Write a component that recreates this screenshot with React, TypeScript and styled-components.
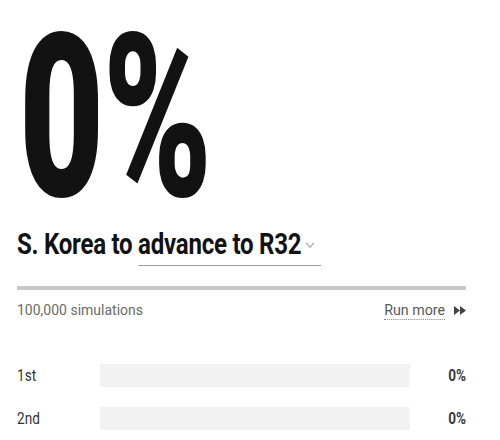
import React from "react";
import styled, { createGlobalStyle } from "styled-components";

const Global = createGlobalStyle`
  body { margin: 0; background: #fff; }
  * { box-sizing: border-box; }
`;

const FONT = `Roboto, "Liberation Sans", sans-serif`;

const Page = styled.div`
  width: 500px;
  height: 440px;
  padding: 0 34px 0 17px;
  font-family: ${FONT};
  color: #121212;
  overflow: hidden;
`;

const Squeeze = styled.span<{ $scale: number; $origin?: string }>`
  display: inline-block;
  white-space: nowrap;
  transform: scaleX(${(p) => p.$scale});
  transform-origin: ${(p) => p.$origin ?? "left"} center;
`;

const BigNumber = styled.div`
  font-size: 228px;
  font-weight: 900;
  line-height: 200px;
  letter-spacing: -2px;
  margin-top: 18px;
  margin-left: 2px;
`;

const Title = styled.h1`
  margin: 8px 0 0 0;
  font-size: 29.5px;
  font-weight: 700;
  line-height: 36px;
  letter-spacing: -0.3px;
`;

const Picker = styled.span`
  display: inline-flex;
  align-items: center;
  gap: 5px;
  border-bottom: 1px solid #9a9a9a;
  padding: 0 8px 3px 0;
  margin-left: 7px;
`;

const Chevron = styled.svg`
  width: 11px;
  height: 8px;
  margin-top: 2px;
`;

const Rule = styled.div`
  height: 4px;
  background: #c7c7c7;
  margin-top: 20px;
`;

const MetaRow = styled.div`
  display: flex;
  justify-content: space-between;
  align-items: center;
  margin-top: 11px;
  font-size: 14px;
  color: #6b6b6b;
`;

const RunMore = styled.span`
  display: inline-flex;
  align-items: center;
  gap: 9px;
`;

const RunLink = styled.span`
  border-bottom: 1px dotted #888;
  font-size: 15px;
  color: #5a5a5a;
  line-height: 18px;
`;

const Rows = styled.div`
  display: flex;
  flex-direction: column;
  gap: 20px;
  margin-top: 45px;
`;

const Row = styled.div`
  display: flex;
  align-items: center;
  height: 23px;
`;

const RowLabel = styled.span`
  width: 83px;
  font-size: 16px;
  color: #333;
`;

const Track = styled.div`
  flex: 1;
  height: 23px;
  background: #f2f2f2;
`;

const Fill = styled.div`
  height: 100%;
  background: #555;
`;

const RowValue = styled.span`
  width: 56px;
  text-align: right;
  font-size: 16px;
  font-weight: 700;
  color: #3a3a3a;
`;

const rows = [
  { label: "1st", value: 0 },
  { label: "2nd", value: 0 },
];

export default function App() {
  return (
    <Page>
      <Global />
      <BigNumber>
        <Squeeze $scale={0.645}>0%</Squeeze>
      </BigNumber>
      <Title>
        <Squeeze $scale={0.815}>
          S. Korea to
          <Picker>
            advance to R32
            <Chevron viewBox="0 0 11 8">
              <path d="M1 2 L5.5 6.5 L10 2" fill="none" stroke="#a0a0a0" strokeWidth="1.2" />
            </Chevron>
          </Picker>
        </Squeeze>
      </Title>
      <Rule />
      <MetaRow>
        <Squeeze $scale={1}>100,000 simulations</Squeeze>
        <RunMore>
          <Squeeze $scale={0.95} $origin="right">
            <RunLink>Run more</RunLink>
          </Squeeze>
          <svg width="12" height="9" viewBox="0 0 12 9">
            <path d="M0 0 L6 4.5 L0 9 Z M6 0 L12 4.5 L6 9 Z" fill="#444" />
          </svg>
        </RunMore>
      </MetaRow>
      <Rows>
        {rows.map((r) => (
          <Row key={r.label}>
            <RowLabel>
              <Squeeze $scale={0.85}>{r.label}</Squeeze>
            </RowLabel>
            <Track>
              <Fill style={{ width: `${r.value}%` }} />
            </Track>
            <RowValue>
              <Squeeze $scale={0.85} $origin="right">
                {r.value}%
              </Squeeze>
            </RowValue>
          </Row>
        ))}
      </Rows>
    </Page>
  );
}
